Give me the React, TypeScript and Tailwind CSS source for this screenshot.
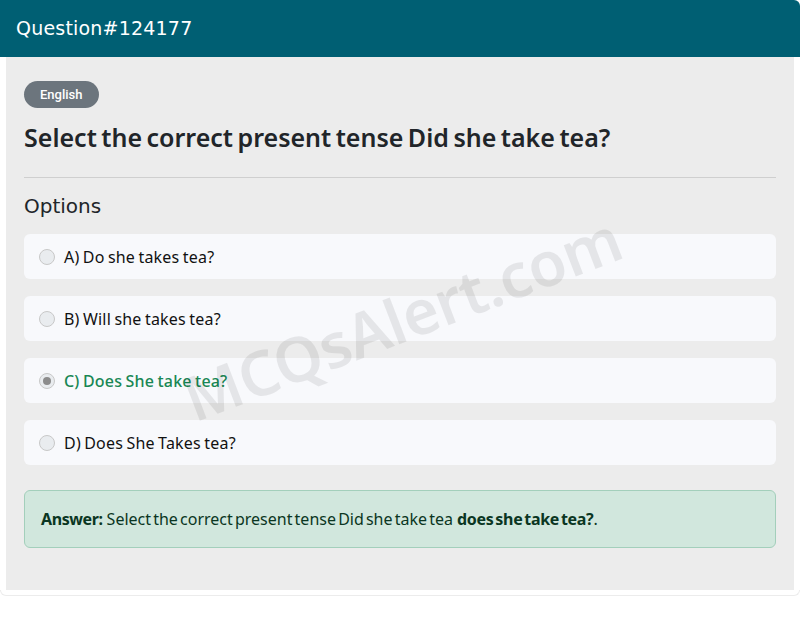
import React from "react";

const options = [
  { label: "A) Do she takes tea?", correct: false },
  { label: "B) Will she takes tea?", correct: false },
  { label: "C) Does She take tea?", correct: true },
  { label: "D) Does She Takes tea?", correct: false },
];

const Radio: React.FC<{ checked: boolean }> = ({ checked }) => (
  <span className="w-4 h-4 rounded-full border border-[#c8c8c8] bg-[#e9ecef] flex items-center justify-center shrink-0">
    {checked && <span className="w-2 h-2 rounded-full bg-[#8c8c8c]" />}
  </span>
);

export default function App() {
  return (
    <div className="w-[800px] h-[621px] bg-white overflow-hidden font-['Noto_Sans',sans-serif]">
      <div className="relative">
        <header className="h-[57px] bg-[#005f73] rounded-tr-[6px] flex items-center px-4">
          <h1 className="text-white text-[19px] font-['DejaVu_Sans',sans-serif] tracking-[0.2px]">
            Question#124177
          </h1>
        </header>

        <main className="mx-[6px] bg-[#ececec] px-[18px] pt-6 pb-[42px]">
          <span className="inline-flex items-center h-[27px] px-4 rounded-full bg-[#6c757d] text-white text-[13px] font-medium font-['Roboto',sans-serif]">
            English
          </span>
          <h2 className="mt-[13px] text-[25px] font-semibold text-[#212529] [word-spacing:-2px] leading-[32px]">
            Select the correct present tense Did she take tea?
          </h2>
          <hr className="mt-[24px] border-t border-[#cfcfcf]" />
          <h3 className="mt-[14px] text-[20px] text-[#212529] font-['DejaVu_Sans',sans-serif] leading-[28px]">
            Options
          </h3>

          <div className="mt-[14px] flex flex-col gap-[17px]">
            {options.map((o) => (
              <div
                key={o.label}
                className="h-[45px] rounded-[6px] bg-[#f8f9fc] flex items-center gap-[9px] pl-[15px]"
              >
                <Radio checked={o.correct} />
                <span
                  className={
                    o.correct
                      ? "text-[16px] font-medium text-[#198754] tracking-[0.2px] [word-spacing:-1px]"
                      : "text-[16px] text-[#111] tracking-[0.2px] [word-spacing:-1px]"
                  }
                >
                  {o.label}
                </span>
              </div>
            ))}
          </div>

          <div className="mt-[25px] h-[58px] rounded-[6px] bg-[#d1e7dd] border border-[#a3cfbb] flex items-center px-4 text-[16px] text-[#0a3622]">
            <span className="font-bold tracking-[-0.4px]">Answer:</span>
            <span className="ml-1 [word-spacing:-2px]">
              Select the correct present tense Did she take tea
            </span>
            <span className="ml-1 font-bold [word-spacing:-2px] tracking-[-0.3px]">does she take tea?</span>
            <span>.</span>
          </div>
        </main>
        <div className="h-[6px] rounded-b-[6px] border-b border-x border-[#ececec]" />

        <div className="pointer-events-none absolute left-[402px] top-[318px] -translate-x-1/2 -translate-y-1/2 -rotate-[21deg] whitespace-nowrap text-[62px] font-semibold text-black/[0.08] font-['Noto_Sans',sans-serif] tracking-[-0.5px]">
          MCQsAlert.com
        </div>
      </div>
    </div>
  );
}
